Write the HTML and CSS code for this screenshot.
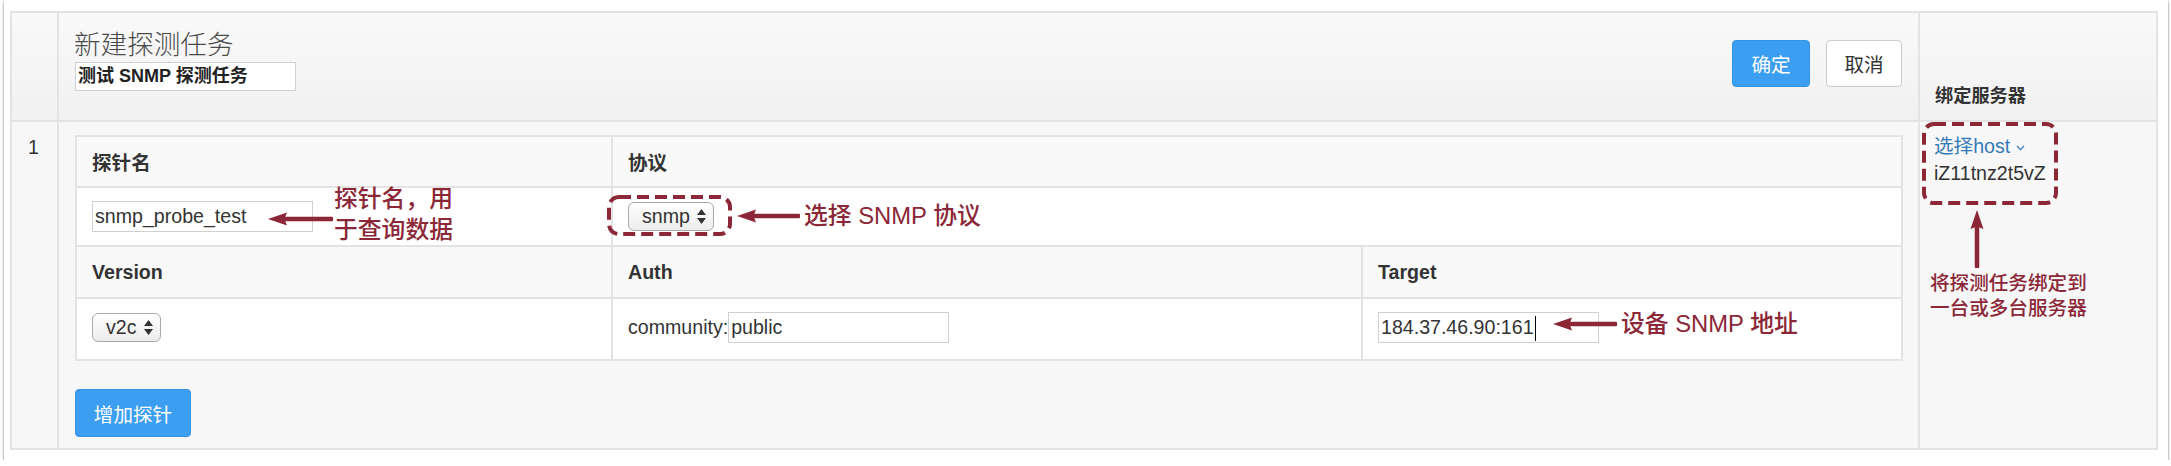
FILE: index.html
```html
<!DOCTYPE html>
<html lang="zh-CN">
<head>
<meta charset="utf-8">
<title>新建探测任务</title>
<link rel="stylesheet" href="styles.css">
</head>
<body>
<div class="card">
  <div class="grid">
    <div class="cell head idx"></div>
    <div class="cell head main">
      <div class="title-block">
        <div class="title">新建探测任务</div>
        <div class="field title-field">测试 SNMP 探测任务</div>
      </div>
      <div class="actions">
        <button class="btn primary ok">确定</button>
        <button class="btn default cancel">取消</button>
      </div>
    </div>
    <div class="cell head bind">绑定服务器</div>

    <div class="cell body idx">1</div>
    <div class="cell body main">
      <div class="probe">
        <div class="th">探针名</div>
        <div class="th span2">协议</div>
        <div class="td"><div class="field f221">snmp_probe_test</div></div>
        <div class="td span2">
          <div class="select">snmp<svg class="updown" width="9" height="15" viewBox="0 0 9 15"><path d="M4.5 0 L9 6 L0 6 Z M0 9 L9 9 L4.5 15 Z"/></svg></div>
        </div>
        <div class="th">Version</div>
        <div class="th">Auth</div>
        <div class="th">Target</div>
        <div class="td r4">
          <div class="select">v2c<svg class="updown" width="9" height="15" viewBox="0 0 9 15"><path d="M4.5 0 L9 6 L0 6 Z M0 9 L9 9 L4.5 15 Z"/></svg></div>
        </div>
        <div class="td r4"><span class="label">community:</span><div class="field f221">public</div></div>
        <div class="td r4"><div class="field f221">184.37.46.90:161<span class="caret"></span></div></div>
      </div>
      <button class="btn primary add">增加探针</button>
    </div>
    <div class="cell body hosts">
      <a class="host-link">选择host<svg class="chev" width="9" height="6" viewBox="0 0 9 6"><polyline points="1,1 4.5,4.6 8,1"/></svg></a>
      <div class="host">iZ11tnz2t5vZ</div>
    </div>
  </div>

  <!-- annotations -->
  <svg class="arrow a1" width="65" height="16" viewBox="0 0 65 16"><path d="M0 8 L19 1.5 L16.5 8 L19 14.5 Z"/><rect x="15" y="5.75" width="50" height="4.5" rx="1"/></svg>
  <div class="ann n1">探针名，用<br>于查询数据</div>

  <svg class="dash d1" width="125" height="41" viewBox="0 0 125 41"><rect x="2" y="2" width="121" height="37" rx="10"/></svg>
  <svg class="arrow a2" width="63" height="16" viewBox="0 0 63 16"><path d="M0 8 L19 1.5 L16.5 8 L19 14.5 Z"/><rect x="15" y="5.75" width="48" height="4.5" rx="1"/></svg>
  <div class="ann n2">选择 SNMP 协议</div>

  <svg class="arrow a3" width="64" height="16" viewBox="0 0 64 16"><path d="M0 8 L19 1.5 L16.5 8 L19 14.5 Z"/><rect x="15" y="5.75" width="49" height="4.5" rx="1"/></svg>
  <div class="ann n3">设备 SNMP 地址</div>

  <svg class="dash d2" width="136" height="83" viewBox="0 0 136 83"><rect x="2" y="2" width="132" height="79" rx="10"/></svg>
  <svg class="arrow a4" width="16" height="58" viewBox="0 0 16 58"><path d="M8 0 L1.5 19 L8 16.5 L14.5 19 Z"/><rect x="5.75" y="15" width="4.5" height="43" rx="1"/></svg>
  <div class="ann small n4">将探测任务绑定到<br>一台或多台服务器</div>
</div>
</body>
</html>
```

FILE: styles.css
```css
html, body {
  margin: 0;
  padding: 0;
  background: #ffffff;
}

body {
  font-family: "Liberation Sans", "Noto Sans CJK SC", sans-serif;
  font-size: 19.6px;
  color: #333333;
}

.card {
  position: relative;
  box-sizing: border-box;
  width: 2164px;
  margin: 0 3px 0 4px;
  padding: 11px 10px 10px 6px;
  background: #ffffff;
  box-shadow: 0 2px 3px rgba(0, 0, 0, 0.4), 0 0 1px rgba(0, 0, 0, 0.35);
}

.grid {
  display: grid;
  box-sizing: border-box;
  width: 2148px;
  grid-template-columns: 45px 1859px 236px;
  grid-template-rows: 107px 326px;
  gap: 2px;
  background: #e3e3e3;
  border: 2px solid #e3e3e3;
}

.cell {
  box-sizing: border-box;
}

.head {
  background: linear-gradient(#f9f9f9, #f1f1f1);
}

.body {
  background: #f7f7f7;
}

.head.main {
  display: flex;
  justify-content: space-between;
  align-items: flex-start;
  padding: 15px 16px 0 15px;
}

.title {
  font-family: "Noto Sans CJK SC", sans-serif;
  font-weight: 300;
  font-size: 26.6px;
  line-height: 30px;
  color: #4a4a4a;
}

.field {
  box-sizing: border-box;
  height: 31px;
  line-height: 29px;
  padding: 0 2px;
  background: #ffffff;
  border: 1px solid #d0d0d0;
  white-space: nowrap;
}

.title-field {
  width: 221px;
  height: 29px;
  line-height: 27px;
  margin: 4px 0 0 1px;
  font-weight: bold;
  font-size: 18px;
  color: #222222;
}

.f221 {
  width: 221px;
}

.actions {
  display: flex;
  gap: 16px;
  margin-top: 12px;
}

.btn {
  box-sizing: border-box;
  height: 47px;
  padding: 0;
  font-family: "Liberation Sans", "Noto Sans CJK SC", sans-serif;
  font-size: 19.6px;
  border-radius: 4px;
  cursor: pointer;
}

.primary {
  background: #3c9ef1;
  border: 1px solid #3593e4;
  color: #ffffff;
}

.default {
  background: #ffffff;
  border: 1px solid #cccccc;
  color: #333333;
}

.ok {
  width: 78px;
}

.cancel {
  width: 76px;
}

.head.bind {
  display: flex;
  align-items: flex-end;
  padding: 0 0 12px 15px;
  font-weight: bold;
  font-size: 18.2px;
  line-height: 24px;
}

.body.idx {
  padding: 13px 0 0 16px;
  line-height: 24px;
}

.body.main {
  display: flex;
  flex-direction: column;
  align-items: flex-start;
  padding: 13px 16px 11px 16px;
}

.probe {
  display: grid;
  box-sizing: border-box;
  width: 1828px;
  grid-template-columns: 534px 748px 538px;
  grid-template-rows: 49px 57px 50px 60px;
  gap: 2px;
  background: #e3e3e3;
  border: 2px solid #e3e3e3;
}

.th,
.td {
  display: flex;
  align-items: center;
  padding-left: 15px;
}

.th {
  background: #f9f9f9;
  font-weight: bold;
}

.td {
  background: #ffffff;
}

.td.r4 {
  padding-bottom: 3px;
}

.span2 {
  grid-column: span 2;
}

.select {
  display: inline-flex;
  align-items: center;
  box-sizing: border-box;
  height: 29px;
  padding: 0 7px 0 13px;
  gap: 7px;
  border: 1px solid #a9a9a9;
  border-radius: 6px;
  background: linear-gradient(#ffffff, #ececec);
  line-height: 27px;
}

.updown {
  fill: #333333;
}

.label {
  white-space: nowrap;
}

.caret {
  display: inline-block;
  width: 1.5px;
  height: 25px;
  margin-left: 1px;
  background: #000000;
  vertical-align: middle;
}

.add {
  width: 116px;
  height: 48px;
  margin-top: 28px;
}

.body.hosts {
  padding: 11px 0 0 14px;
  line-height: 27px;
}

.host-link {
  color: #337ab7;
  text-decoration: none;
}

.chev {
  margin-left: 6px;
  vertical-align: middle;
  fill: none;
  stroke: #337ab7;
  stroke-width: 1.2;
}

/* annotations laid over the screenshot */
.arrow,
.dash,
.ann {
  position: absolute;
}

.arrow {
  fill: #8b2737;
}

.dash rect {
  fill: none;
  stroke: #8b2737;
  stroke-width: 4;
  stroke-dasharray: 12 6;
}

.ann {
  color: #8b2737;
  font-size: 23.8px;
  font-weight: 500;
  line-height: 30px;
  white-space: nowrap;
}

.ann.small {
  font-size: 19.6px;
  line-height: 25px;
}

.a1 { left: 264px; top: 211px; }
.n1 { left: 330px; top: 183px; line-height: 31px; }

.d1 { left: 603px; top: 195px; }
.a2 { left: 733px; top: 208px; }
.n2 { left: 800px; top: 201px; }

.a3 { left: 1549px; top: 316px; }
.n3 { left: 1617px; top: 309px; }

.d2 { left: 1918px; top: 122px; }
.a4 { left: 1965px; top: 210px; }
.n4 { left: 1926px; top: 271px; }
```
